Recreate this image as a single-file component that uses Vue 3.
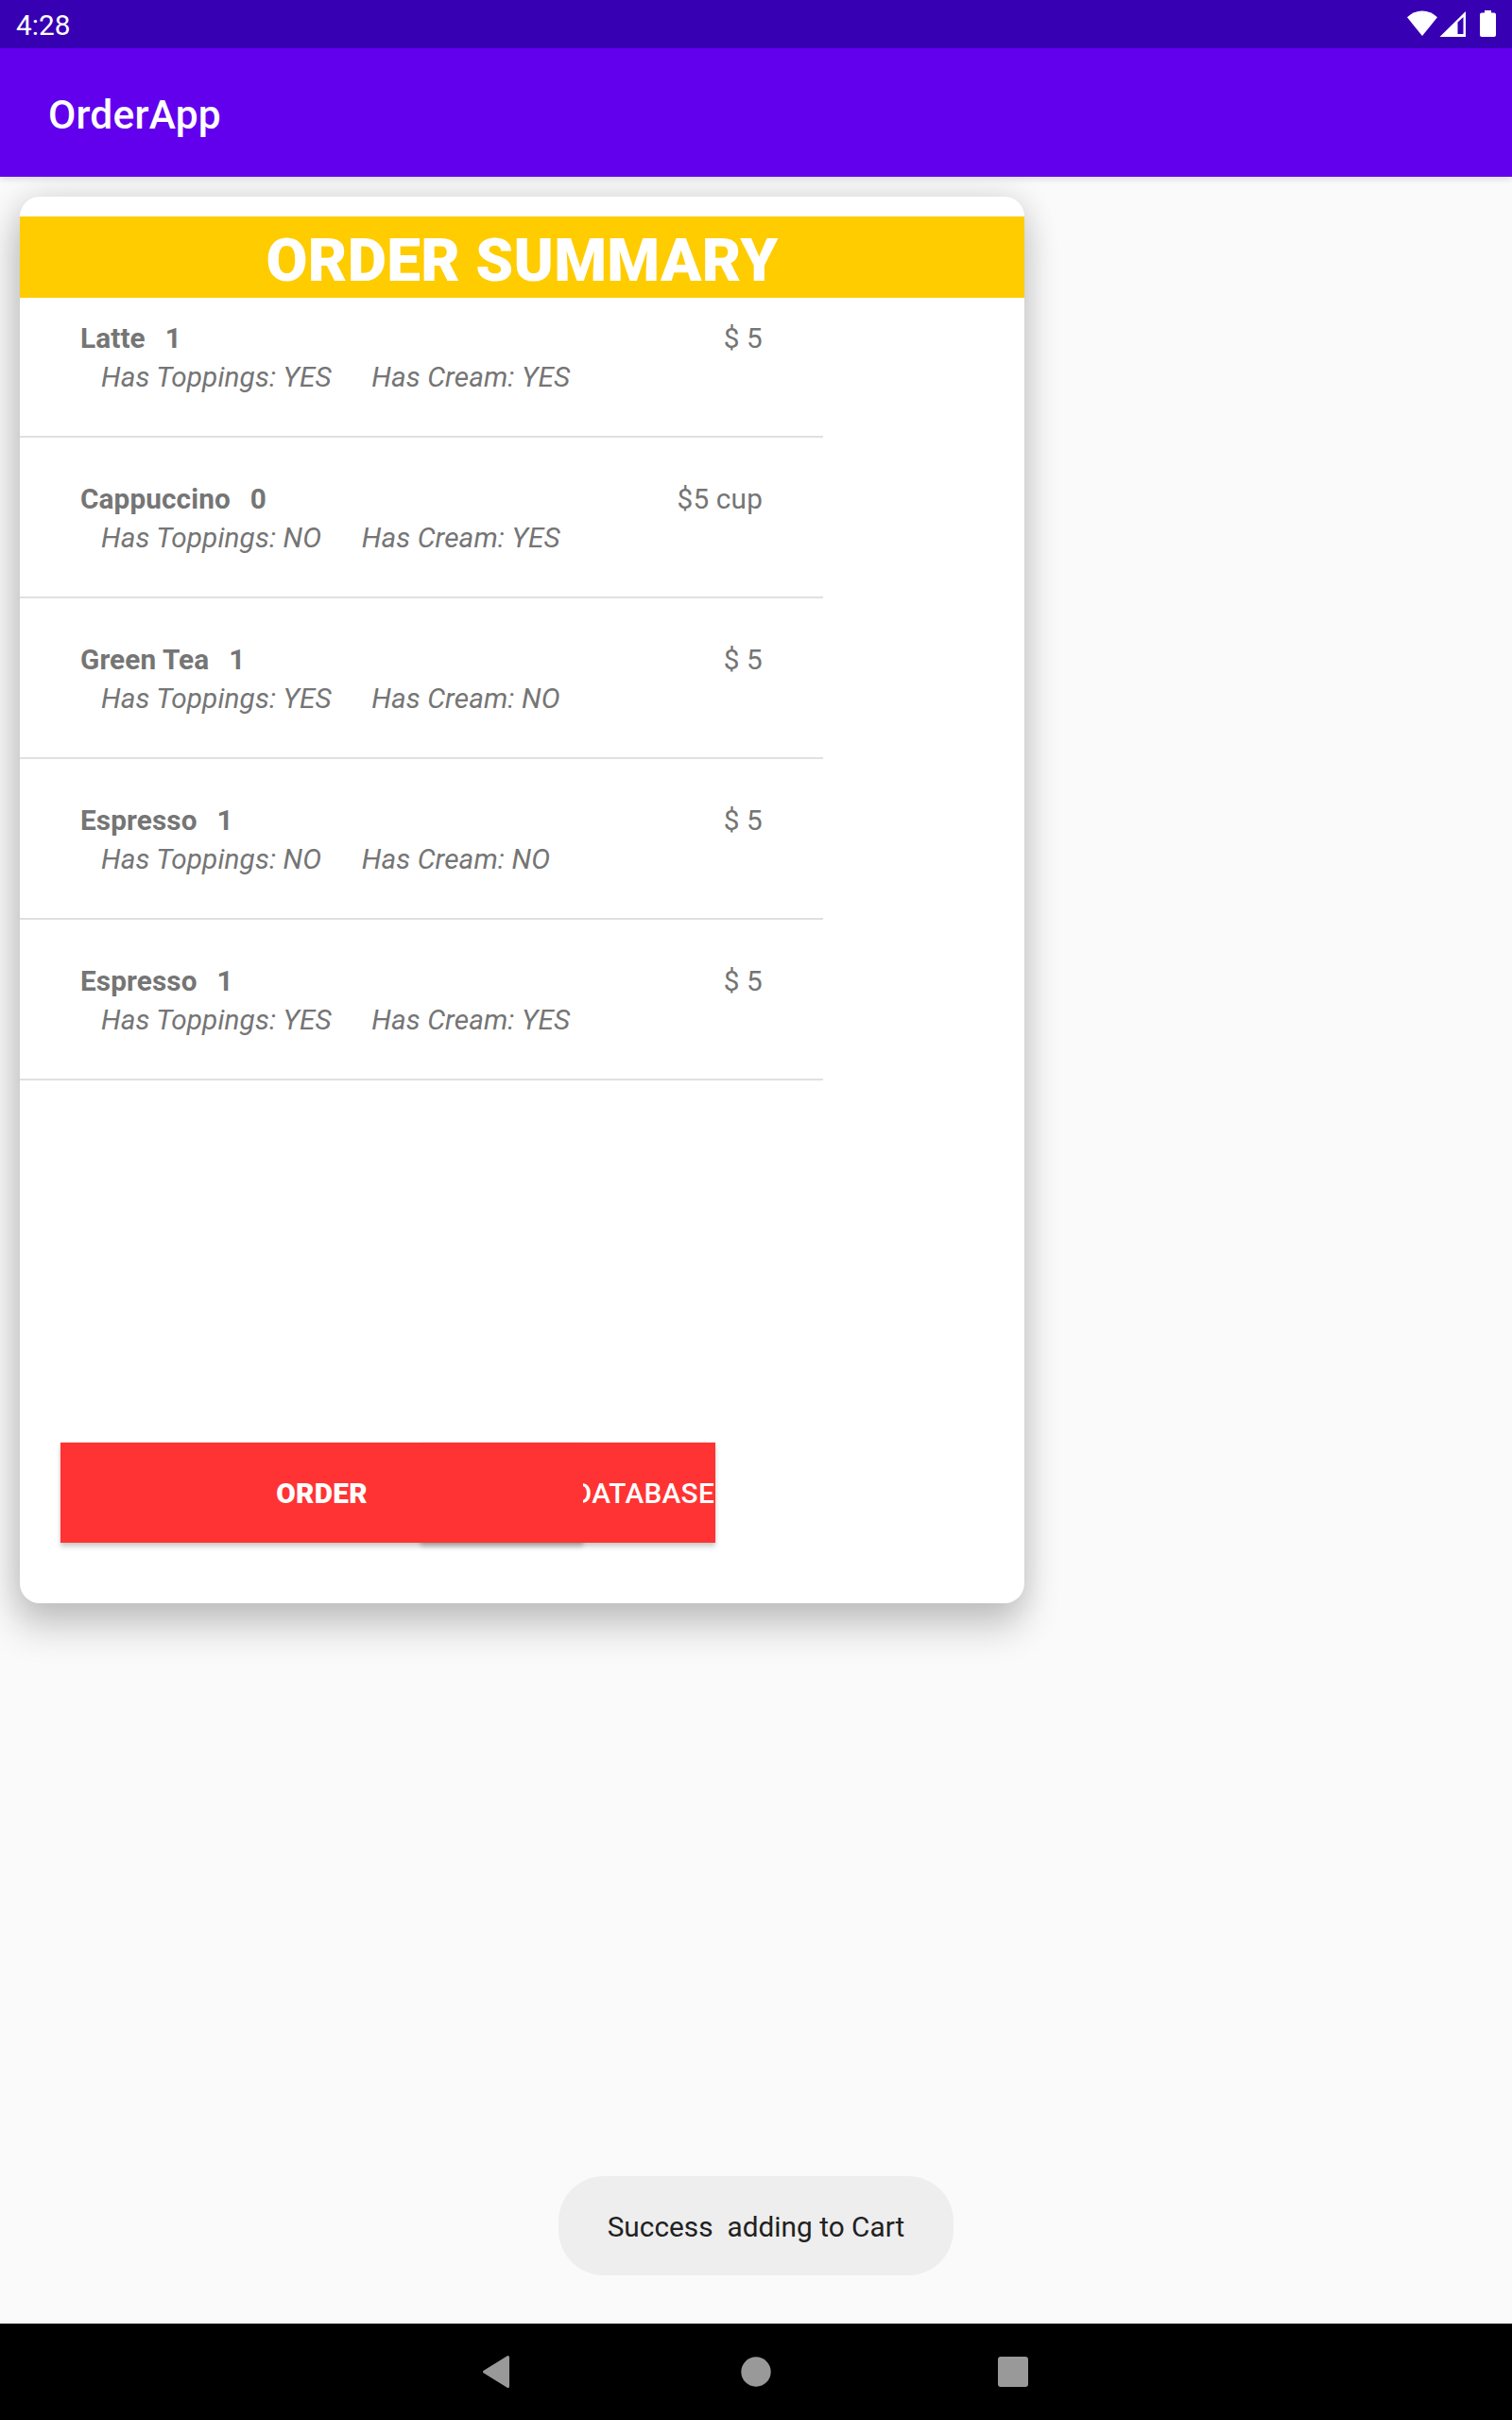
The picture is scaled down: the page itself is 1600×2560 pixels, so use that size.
<script setup>
const items = [
  { name: 'Latte', qty: 1, price: '$ 5', toppings: 'YES', cream: 'YES' },
  { name: 'Cappuccino', qty: 0, price: '$5 cup', toppings: 'NO', cream: 'YES' },
  { name: 'Green Tea', qty: 1, price: '$ 5', toppings: 'YES', cream: 'NO' },
  { name: 'Espresso', qty: 1, price: '$ 5', toppings: 'NO', cream: 'NO' },
  { name: 'Espresso', qty: 1, price: '$ 5', toppings: 'YES', cream: 'YES' },
]
</script>

<template>
  <div class="screen">
    <header class="top">
      <div class="status">
        <span class="clock">4:28</span>
        <svg class="status-icons" width="96" height="30" viewBox="0 0 96 30" fill="#fff">
          <path d="M0 8.200Q7 1.500 16 1.500T32 8.200L16 28z" />
          <path fill-rule="evenodd" d="M34.500 29 62 2V29zM53.500 13.500V26H59.500V8z" />
          <path d="M82 1h7v2.500h3q2 0 2 2V27q0 2-2 2H79q-2 0-2-2V5.500q0-2 2-2h3z" />
        </svg>
      </div>
      <div class="appbar"><h1>OrderApp</h1></div>
    </header>

    <main>
      <section class="card">
        <h2>ORDER SUMMARY</h2>
        <ul class="list">
          <li v-for="(item, i) in items" :key="i">
            <div class="line">
              <b>{{ item.name }}</b>
              <b class="qty">{{ item.qty }}</b>
              <span class="price">{{ item.price }}</span>
            </div>
            <div class="options">
              <i>Has Toppings: {{ item.toppings }}</i>
              <i>Has Cream: {{ item.cream }}</i>
            </div>
          </li>
        </ul>
        <div class="actions">
          <button class="order">ORDER</button>
          <button class="database">DATABASE</button>
        </div>
      </section>
      <div class="toast">Success&nbsp; adding to Cart</div>
    </main>

    <nav class="navbar">
      <svg width="32" height="36" viewBox="0 0 32 36"><path d="M28.500 2.500V33.500L3.500 18z" fill="#999" stroke="#999" stroke-width="3" stroke-linejoin="round" /></svg>
      <svg class="home" width="32" height="32" viewBox="0 0 32 32"><circle cx="16" cy="16" r="15.700" fill="#999" /></svg>
      <svg width="32" height="32" viewBox="0 0 32 32"><rect width="32" height="32" rx="3" fill="#999" /></svg>
    </nav>
  </div>
</template>

<style>
body {
  margin: 0;
}
</style>

<style scoped>
.screen {
  width: 1600px;
  height: 2560px;
  display: flex;
  flex-direction: column;
  overflow: hidden;
  background: #fafafa;
  font-family: Roboto, sans-serif;
  font-size: 29.75px;
  line-height: 35px;
  color: #757575;
}
.top {
  position: relative;
  z-index: 2;
  color: #fff;
  box-shadow: 0 2px 7px rgba(0, 0, 0, 0.14);
}
.status {
  height: 51px;
  box-sizing: border-box;
  padding: 10px 15px 0 17px;
  background: #3700b3;
  display: flex;
  justify-content: space-between;
}
.clock {
  line-height: 34px;
}
.appbar {
  height: 136px;
  box-sizing: border-box;
  padding: 5px 51px 0;
  background: #6200ee;
  display: flex;
  align-items: center;
}
h1 {
  margin: 0;
  font-size: 42.5px;
  line-height: 50px;
  font-weight: 500;
  letter-spacing: 0.2px;
}
main {
  flex: 1;
  display: flex;
  flex-direction: column;
  align-items: center;
  justify-content: space-between;
  padding: 21px 0 51px;
}
.card {
  align-self: flex-start;
  margin-left: 21px;
  width: 1063px;
  height: 1488px;
  box-sizing: border-box;
  padding: 21px 0 64px;
  display: flex;
  flex-direction: column;
  border-radius: 21px;
  background: #fff;
  box-shadow: -3px 24px 38px 3px rgba(0, 0, 0, 0.19), 0 0 34px rgba(0, 0, 0, 0.12);
}
h2 {
  margin: 0;
  height: 86px;
  box-sizing: border-box;
  padding-top: 7px;
  background: #ffcc00;
  color: #fff;
  font-size: 63.75px;
  line-height: 80px;
  font-weight: 900;
  letter-spacing: 0.3px;
  text-align: center;
}
.list {
  list-style: none;
  margin: 0;
  padding: 0;
  width: 850px;
}
li {
  height: 170px;
  box-sizing: border-box;
  padding: 0 64px 45px;
  border-bottom: 2px solid #e0e0e0;
  display: flex;
  flex-direction: column;
  justify-content: flex-end;
  gap: 6px;
}
li:first-child {
  height: 148px;
}
.line {
  display: flex;
  gap: 21px;
  letter-spacing: 0.1px;
}
.price {
  margin-left: auto;
  letter-spacing: 0.15px;
}
.options {
  display: flex;
  gap: 42.5px;
  padding-left: 22px;
  letter-spacing: 0.11px;
}
.actions {
  position: relative;
  z-index: 0;
  align-self: flex-start;
  margin: auto 0 0 43px;
  display: flex;
}
/* One shadow per button, both under the buttons so neither darkens the other. */
.actions::before,
.actions::after {
  content: '';
  position: absolute;
  z-index: -1;
  top: 0;
  bottom: 0;
  box-shadow: 0 4px 5px rgba(0, 0, 0, 0.2), 0 0 3px rgba(0, 0, 0, 0.06);
}
.actions::before {
  left: 0;
  width: 553px;
}
.actions::after {
  right: 0;
  width: 312px;
}
button {
  height: 106px;
  border: 0;
  padding: 0;
  background: #ff3333;
  color: #fff;
  font: 500 29.75px/35px Roboto, sans-serif;
  letter-spacing: 0.3px;
}
/* The order button overlaps the start of the database button. */
.order {
  z-index: 1;
  width: 553px;
  font-weight: 900;
}
.database {
  width: 312px;
  margin-left: -172px;
  padding-right: 1px;
  text-align: right;
}
.toast {
  height: 105px;
  width: 418px;
  border-radius: 48px;
  background: #eee;
  color: #212121;
  text-align: center;
  line-height: 107px;
  letter-spacing: 0.04px;
}
.home {
  margin-left: 3px;
}
.navbar {
  height: 102px;
  box-sizing: border-box;
  padding: 0 512px 0 509px;
  background: #000;
  display: flex;
  align-items: center;
  justify-content: space-between;
}
</style>
